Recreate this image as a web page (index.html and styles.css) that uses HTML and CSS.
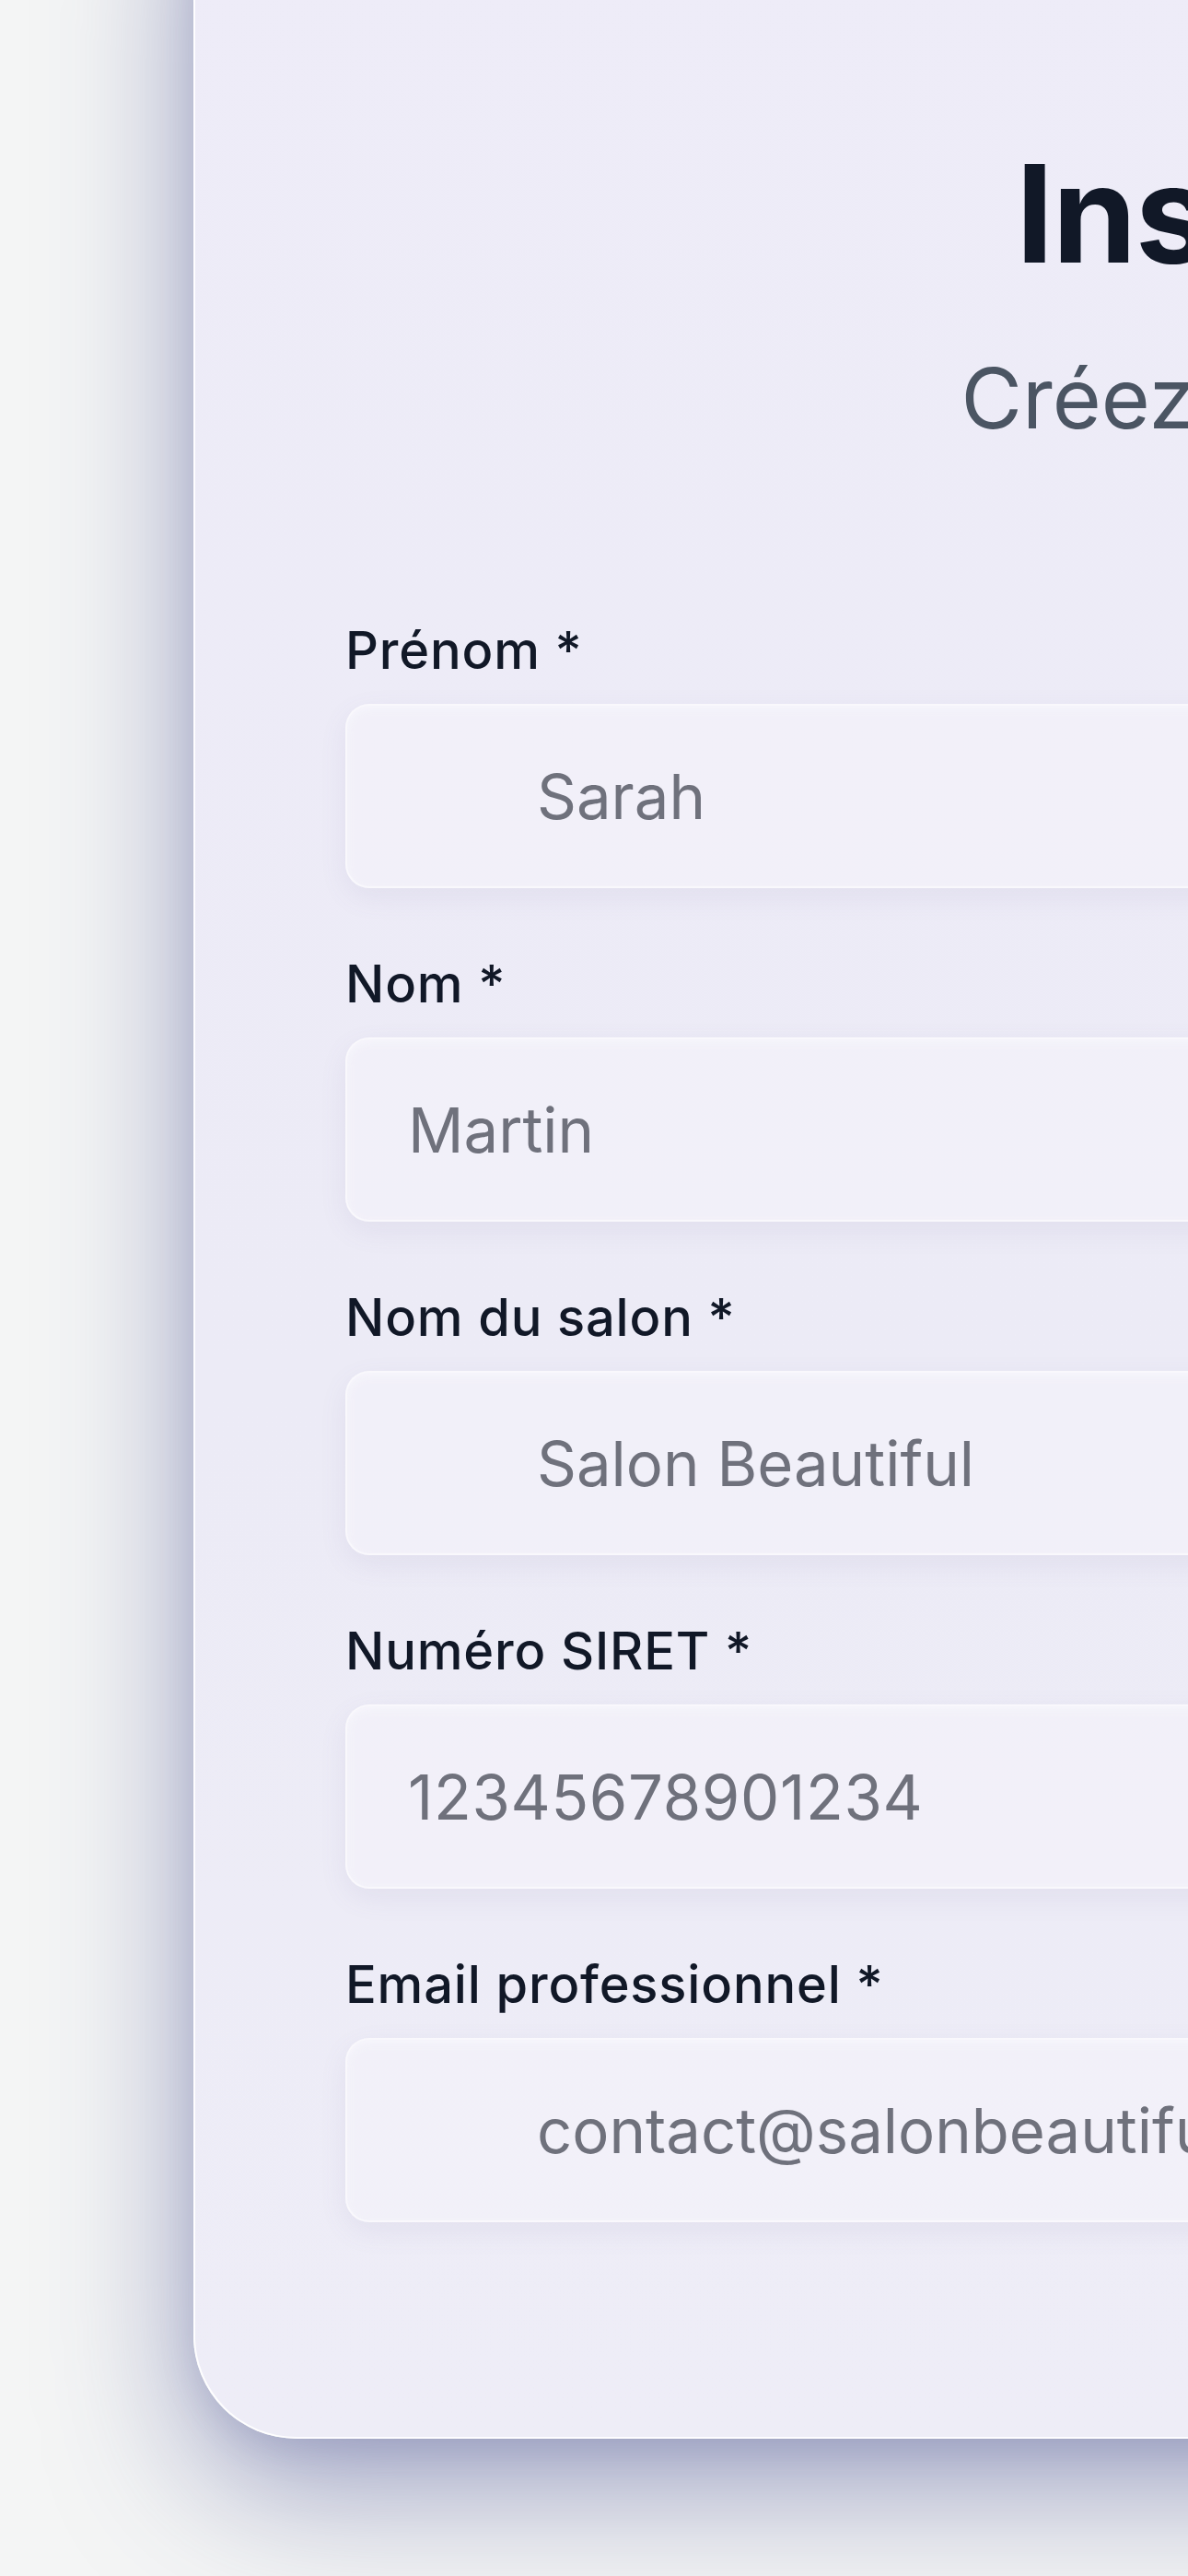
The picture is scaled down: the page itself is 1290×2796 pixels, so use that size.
FILE: index.html
```html
<!DOCTYPE html>
<html lang="fr">
<head>
<meta charset="utf-8">
<title>Inscription</title>
<link rel="stylesheet" href="styles.css">
</head>
<body>
<div class="page">
  <section class="card">
    <header class="card-header">
      <h1 class="title">Inscription</h1>
      <p class="subtitle">Créez votre compte</p>
    </header>
    <form class="form">
      <div class="field">
        <label class="label" for="prenom">Prénom *</label>
        <input class="input input-indent" id="prenom" type="text" placeholder="Sarah">
      </div>
      <div class="field">
        <label class="label" for="nom">Nom *</label>
        <input class="input" id="nom" type="text" placeholder="Martin">
      </div>
      <div class="field">
        <label class="label" for="salon">Nom du salon *</label>
        <input class="input input-indent" id="salon" type="text" placeholder="Salon Beautiful">
      </div>
      <div class="field">
        <label class="label" for="siret">Numéro SIRET *</label>
        <input class="input input-number" id="siret" type="text" placeholder="12345678901234">
      </div>
      <div class="field">
        <label class="label" for="email">Email professionnel *</label>
        <input class="input input-indent" id="email" type="email" placeholder="contact@salonbeautiful.fr">
      </div>
    </form>
  </section>
</div>
</body>
</html>
```
FILE: styles.css
```css
html, body {
  margin: 0;
  padding: 0;
  overflow: hidden;
}

body {
  width: 1290px;
  height: 2796px;
  background: #f4f5f5;
  font-family: Inter, "Noto Sans", "Liberation Sans", sans-serif;
}

.page {
  padding-left: 210px;
}

.card {
  box-sizing: border-box;
  width: 2540px;
  margin-top: -200px;
  padding: 342px 163px 233px;
  background: linear-gradient(180deg, #eeecf8 0%, #ecebf6 60%, #eeedf7 100%);
  border: 2px solid rgba(255, 255, 255, 0.9);
  border-radius: 112px;
  box-shadow: 0 50px 150px rgba(62, 70, 140, 0.5), 0 12px 40px rgba(62, 70, 140, 0.12);
}

.card-header {
  display: flex;
  flex-direction: column;
  align-items: center;
}

.title {
  margin: 0;
  font-size: 147px;
  line-height: 176px;
  font-weight: 700;
  letter-spacing: -0.01em;
  color: #111827;
  white-space: nowrap;
}

.subtitle {
  margin: 54px 0 0;
  font-size: 91px;
  line-height: 117px;
  font-weight: 400;
  letter-spacing: 0;
  word-spacing: 12px;
  color: #4b5563;
  white-space: nowrap;
}

.form {
  margin-top: 177px;
  display: flex;
  flex-direction: column;
  gap: 66px;
}

.field {
  display: flex;
  flex-direction: column;
  gap: 20px;
}

.label {
  font-size: 56px;
  line-height: 76px;
  font-weight: 500;
  letter-spacing: 0.015em;
  color: #111827;
}

.input {
  box-sizing: border-box;
  width: 100%;
  height: 200px;
  margin: 0;
  padding: 0 40px 0 66px;
  border: 2px solid rgba(255, 255, 255, 0.5);
  border-radius: 26px;
  background: rgba(243, 242, 249, 0.75);
  box-shadow: 0 10px 30px rgba(110, 105, 155, 0.09), inset 0 4px 10px rgba(255, 255, 255, 0.35);
  font-family: Inter, "Noto Sans", "Liberation Sans", sans-serif;
  font-size: 67px;
  color: #6f717c;
  outline: none;
}

.input::placeholder {
  color: #6f717c;
  opacity: 1;
}

.input-indent {
  padding-left: 206px;
}

.input-number {
  letter-spacing: 0.01em;
}
```
